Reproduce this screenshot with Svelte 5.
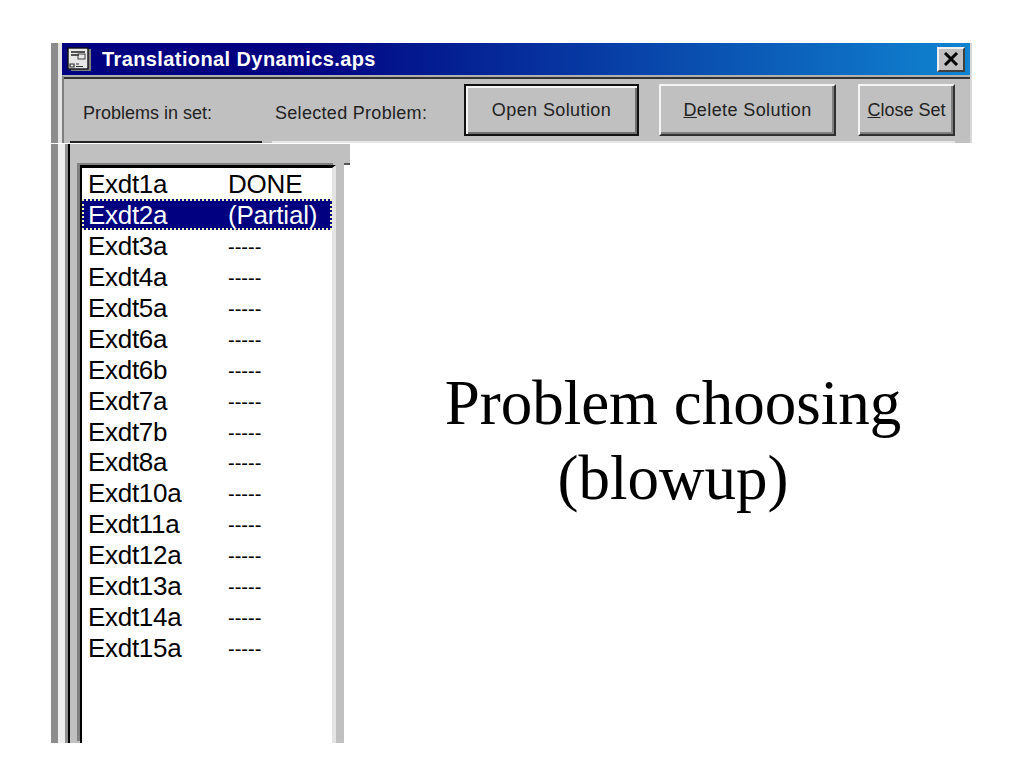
<script>
  const problems = [
    { name: 'Exdt1a', status: 'DONE' },
    { name: 'Exdt2a', status: '(Partial)', selected: true },
    { name: 'Exdt3a' },
    { name: 'Exdt4a' },
    { name: 'Exdt5a' },
    { name: 'Exdt6a' },
    { name: 'Exdt6b' },
    { name: 'Exdt7a' },
    { name: 'Exdt7b' },
    { name: 'Exdt8a' },
    { name: 'Exdt10a' },
    { name: 'Exdt11a' },
    { name: 'Exdt12a' },
    { name: 'Exdt13a' },
    { name: 'Exdt14a' },
    { name: 'Exdt15a' }
  ];
</script>

<div class="slide">
  <div class="window">
    <div class="titlebar">
      <svg class="app-icon" width="25" height="25" viewBox="0 0 25 25">
        <rect x="4" y="2" width="20" height="22" fill="#808080" />
        <rect x="1" y="1" width="20" height="21" fill="#e8e8e8" stroke="#101010" stroke-width="1.4" />
        <path d="M4 5h14M4 8h8" stroke="#202020" stroke-width="1.4" fill="none" />
        <rect x="11" y="7" width="7" height="5" fill="none" stroke="#404040" />
        <path d="M3 17h4v3h-4zM9 17h3M9 19.5h7" stroke="#303030" stroke-width="1.2" fill="none" />
      </svg>
      <span class="title">Translational Dynamics.aps</span>
      <button class="close-x" aria-label="Close">
        <svg width="16" height="14" viewBox="0 0 16 14">
          <path d="M2 1l12 12M14 1L2 13" stroke="#000" stroke-width="3" fill="none" />
        </svg>
      </button>
    </div>

    <div class="toolbar">
      <div class="controls">
        <span class="label first">Problems in set:</span>
        <span class="label second">Selected Problem:</span>
        <button class="btn default">Open Solution</button>
        <button class="btn delete"><u>D</u>elete Solution</button>
        <button class="btn closeset"><u>C</u>lose Set</button>
      </div>
      <div class="rule">
        <span class="rule-dark"></span>
        <span class="rule-light"></span>
      </div>
    </div>
  </div>

  <div class="body">
    <div class="picker">
      <div class="band"></div>
      <div class="well-row">
        <div class="well">
          <ul class="list">
            {#each problems as p}
              <li class="row" class:selected={p.selected}>
                <span class="name">{p.name}</span>
                {#if p.status}
                  <span class="status">{p.status}</span>
                {:else}
                  <span class="dashes">-----</span>
                {/if}
              </li>
            {/each}
          </ul>
        </div>
        <div class="tick"></div>
      </div>
    </div>

    <div class="caption">Problem choosing<br />(blowup)</div>
  </div>
</div>

<style>
  :global(body) {
    margin: 0;
    background: #fff;
  }

  .slide {
    width: 1024px;
    height: 768px;
    padding-top: 43px;
    box-sizing: border-box;
    background: #fff;
    overflow: hidden;
    font-family: "Liberation Sans", Arial, sans-serif;
  }

  .window {
    margin-left: 51px;
    width: 921px;
    box-sizing: border-box;
    border-left: 7px solid #8c8c8c;
    border-right: 2px solid #d8d8d8;
    padding-left: 4px;
    background: #e4e4e4;
  }

  .titlebar {
    height: 32px;
    display: flex;
    align-items: center;
    padding: 0 5px;
    box-sizing: border-box;
    background: linear-gradient(to right, #000080 0%, #000080 25%, #1084d0 100%);
  }

  .app-icon {
    flex: none;
  }

  .title {
    margin-left: 10px;
    color: #fff;
    font-size: 20px;
    font-weight: 700;
    letter-spacing: 0.4px;
    flex: 1;
  }

  .close-x {
    width: 28px;
    height: 25px;
    padding: 0;
    display: flex;
    align-items: center;
    justify-content: center;
    background: #c0c0c0;
    border: 2px solid;
    border-color: #f0f0f0 #404040 #404040 #f0f0f0;
  }

  .toolbar {
    height: 68px;
    box-sizing: border-box;
    background: #c0c0c0;
    border-top: 2px solid #b0b0b0;
    border-left: 2px solid #808080;
    display: flex;
    flex-direction: column;
  }

  .controls {
    flex: 1;
    display: flex;
    align-items: flex-start;
    border-top: 2px solid #333;
    padding: 5px 0 0 19px;
  }

  .label {
    flex: none;
    color: #222;
    font-size: 18px;
    margin-top: 19px;
  }

  .label.first {
    width: 192px;
  }

  .label.second {
    width: 189px;
    letter-spacing: 0.3px;
  }

  .btn {
    flex: none;
    height: 52px;
    padding: 0;
    box-sizing: border-box;
    background: #c0c0c0;
    color: #222;
    font-family: inherit;
    font-size: 18px;
    letter-spacing: 0.4px;
    border: 2px solid;
    border-color: #f4f4f4 #303030 #303030 #f4f4f4;
    box-shadow: inset -2px -2px 0 #808080;
  }

  .btn.default {
    width: 175px;
    margin-right: 20px;
    border-color: #111;
    box-shadow: inset 2px 2px 0 #f4f4f4, inset -2px -2px 0 #707070;
  }

  .btn.delete {
    width: 177px;
    margin-right: 22px;
  }

  .btn.closeset {
    width: 97px;
    letter-spacing: 0;
  }

  .rule {
    display: flex;
    height: 2px;
  }

  .rule-dark {
    margin-left: 6px;
    width: 192px;
    background: #222;
  }

  .rule-light {
    margin-left: 10px;
    width: 683px;
    background: #e6e6e6;
  }

  .body {
    display: flex;
    height: 600px;
    margin-left: 51px;
    padding-top: 1px;
    box-sizing: border-box;
  }

  .picker {
    flex: none;
    width: 299px;
    box-sizing: border-box;
    border-left: 7px solid #8c8c8c;
    padding-left: 10px;
    background: linear-gradient(to right, #eee 0, #eee 7px, #fff 7px);
    display: flex;
    flex-direction: column;
  }

  .band {
    height: 19px;
    width: 282px;
    box-sizing: border-box;
    background: #c0c0c0;
    border-left: 2px solid #000;
    box-shadow: -3px 0 0 #909090;
  }

  .well-row {
    flex: 1;
    display: flex;
    align-items: flex-start;
    min-height: 0;
  }

  .well {
    width: 276px;
    height: 100%;
    box-sizing: border-box;
    background: #c0c0c0;
    border-left: 2px solid #000;
    box-shadow: -3px 0 0 #909090;
    padding: 2px 0 0 10px;
  }

  .tick {
    width: 6px;
    height: 2px;
    background: #555;
  }

  .list {
    list-style: none;
    margin: 0;
    padding: 0;
    width: 256px;
    height: 100%;
    box-sizing: border-box;
    background: #fff;
    border-top: 3px solid #000;
    border-left: 2px solid #000;
    border-right: 4px solid #e4e4e4;
    box-shadow: -3px -2px 0 #808080;
  }

  .row {
    display: flex;
    align-items: center;
    height: 30.9px;
    box-sizing: border-box;
    padding: 3px 0 0 6px;
    color: #000;
    font-size: 26px;
    letter-spacing: -0.3px;
  }

  .row.selected {
    background: #000080;
    color: #fff;
    outline: 2px dotted #f4f4c0;
    outline-offset: -2px;
  }

  .name {
    width: 140px;
    flex: none;
  }

  .status {
    letter-spacing: -0.2px;
  }

  .dashes {
    font-size: 20px;
    letter-spacing: 0;
    padding-top: 2px;
  }

  .caption {
    flex: none;
    width: 646px;
    padding-top: 222px;
    text-align: center;
    font-family: "Liberation Serif", "Times New Roman", serif;
    font-size: 63px;
    line-height: 75px;
    color: #000;
  }
</style>
